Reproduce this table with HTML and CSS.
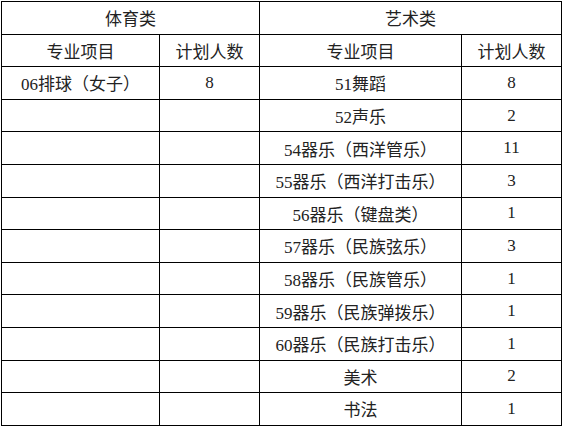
FILE: index.html
```html
<!DOCTYPE html>
<html lang="zh">
<head>
<meta charset="utf-8">
<link rel="stylesheet" href="styles.css">
</head>
<body>
<table class="plan">
  <colgroup>
    <col class="c1"><col class="c2"><col class="c3"><col class="c4">
  </colgroup>
  <tr><td colspan="2">体育类</td><td colspan="2">艺术类</td></tr>
  <tr><td>专业项目</td><td>计划人数</td><td>专业项目</td><td>计划人数</td></tr>
  <tr><td>06排球（女子）</td><td class="n">8</td><td>51舞蹈</td><td class="n">8</td></tr>
  <tr><td></td><td></td><td>52声乐</td><td class="n">2</td></tr>
  <tr><td></td><td></td><td>54器乐（西洋管乐）</td><td class="n">11</td></tr>
  <tr><td></td><td></td><td>55器乐（西洋打击乐）</td><td class="n">3</td></tr>
  <tr><td></td><td></td><td>56器乐（键盘类）</td><td class="n">1</td></tr>
  <tr><td></td><td></td><td>57器乐（民族弦乐）</td><td class="n">3</td></tr>
  <tr><td></td><td></td><td>58器乐（民族管乐）</td><td class="n">1</td></tr>
  <tr><td></td><td></td><td>59器乐（民族弹拨乐）</td><td class="n">1</td></tr>
  <tr><td></td><td></td><td>60器乐（民族打击乐）</td><td class="n">1</td></tr>
  <tr><td></td><td></td><td>美术</td><td class="n">2</td></tr>
  <tr><td></td><td></td><td>书法</td><td class="n">1</td></tr>
</table>
</body>
</html>
```

FILE: styles.css
```css
html, body {
  margin: 0;
  padding: 0;
  background: #fff;
}
.plan {
  margin: 1px 0 0 1px;
  border-collapse: collapse;
  table-layout: fixed;
  width: 560px;
  font-family: "Liberation Serif", "Noto Sans CJK SC", serif;
  font-size: 17px;
  color: #222;
}
.c1 { width: 158px; }
.c2 { width: 100px; }
.c3 { width: 202px; }
.c4 { width: 100px; }
.plan td {
  border: 1.5px solid #000;
  height: 31.6px;
  padding: 0;
  text-align: center;
  vertical-align: middle;
  white-space: nowrap;
}
```
